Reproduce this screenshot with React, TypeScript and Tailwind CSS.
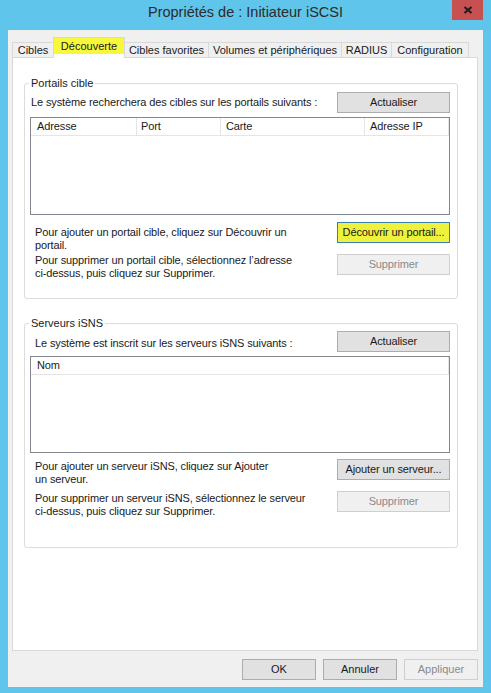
import type { ReactNode } from "react";

// bouton Windows (normal / désactivé / focus surligné)
function Btn({
  children,
  disabled,
  marked,
  w = "w-[113px]",
}: {
  children: ReactNode;
  disabled?: boolean;
  marked?: boolean;
  w?: string;
}) {
  let cls = "bg-[#e1e1e1] border-[#adadad] text-[#1a1a1a]";
  if (disabled) cls = "bg-[#f0f0f0] border-[#cfcfcf] text-[#8a8a8a]";
  if (marked) cls = "bg-[#eef23c] border-[#3c7fb1] text-[#1a1a1a]";
  return (
    <div
      className={`${w} h-[21px] shrink-0 border ${cls} flex items-center justify-center text-[11px] leading-[13px] whitespace-nowrap`}
    >
      {children}
    </div>
  );
}

function Tab({ label, w, selected }: { label: string; w: string; selected?: boolean }) {
  if (selected) {
    return (
      <div className={`${w} h-[21px] -mb-[1px] -ml-[1px] relative z-10 bg-white border-t border-l border-r border-[#d9d9d9]`}>
        <div className="h-[16px] bg-[#f7f83c] flex items-center justify-center text-[11px] text-[#1a1a1a]">
          {label}
        </div>
      </div>
    );
  }
  return (
    <div
      className={`${w} h-[15px] -ml-[1px] first:ml-0 bg-[#f0f0f0] border-t border-l border-r border-[#d9d9d9] flex items-center justify-center text-[11px] text-[#1a1a1a]`}
    >
      {label}
    </div>
  );
}

export default function App() {
  return (
    <div className="w-[491px] h-[693px] bg-[#60c5ea] flex flex-col px-[8px] pb-[6px] font-['Liberation_Sans',Arial,sans-serif] text-[#1a1a1a]">
      {/* barre de titre */}
      <div className="h-[30px] shrink-0 relative flex items-center justify-center pb-[4px]">
        <span className="text-[14.5px] text-[#2b2b2b]">Propriétés de : Initiateur iSCSI</span>
        <div className="absolute right-0 top-0 w-[31px] h-[20px] bg-[#c75050] flex items-center justify-center">
          <svg width="10" height="8" viewBox="0 0 10 8">
            <path d="M1.5 1 L8.5 7 M8.5 1 L1.5 7" stroke="#1c1c1c" strokeWidth="2" fill="none" />
          </svg>
        </div>
      </div>

      {/* zone client */}
      <div className="flex-1 bg-[#f0f0f0] flex flex-col pt-[7px] pl-[4px] pr-[5px]">
        {/* onglets */}
        <div className="h-[20px] flex items-end">
          <Tab label="Cibles" w="w-[42px]" />
          <Tab label="Découverte" w="w-[72px]" selected />
          <Tab label="Cibles favorites" w="w-[85px]" />
          <Tab label="Volumes et périphériques" w="w-[134px]" />
          <Tab label="RADIUS" w="w-[51px]" />
          <Tab label="Configuration" w="w-[78px]" />
        </div>

        {/* panneau */}
        <div className="h-[594px] border border-[#d9d9d9] bg-white pl-[11px] pt-[17px] flex flex-col">
          {/* Portails cible */}
          <fieldset className="w-[434px] h-[224px] border border-[#dcdcdc] rounded-[3px] pl-[5px] pr-[7px] pt-[1px]">
            <legend className="-ml-[1px] px-[2px] text-[11px] leading-[16px]">Portails cible</legend>
            <div className="flex flex-col tracking-[-0.12px]">
              <div className="h-[21px] flex items-center justify-between">
                <span className="pl-[1px] text-[11px]">
                  Le système recherchera des cibles sur les portails suivants :
                </span>
                <Btn>Actualiser</Btn>
              </div>

              <div className="mt-[4px] h-[98px] border border-[#828790] bg-white">
                <div className="h-[18px] flex border-b border-[#e5e5e5] text-[11px]">
                  <div className="w-[106px] border-r border-[#e5e5e5] pl-[6px] flex items-center">Adresse</div>
                  <div className="w-[84px] border-r border-[#e5e5e5] pl-[4px] flex items-center">Port</div>
                  <div className="w-[144px] border-r border-[#e5e5e5] pl-[5px] flex items-center">Carte</div>
                  <div className="w-[84px] border-r border-[#e5e5e5] pl-[5px] flex items-center">Adresse IP</div>
                </div>
              </div>

              <div className="mt-[7px] flex justify-between">
                <div className="pl-[5px] pt-[3.5px] flex flex-col gap-[2px] text-[11px] leading-[13px] whitespace-nowrap">
                  <p>
                    Pour ajouter un portail cible, cliquez sur Découvrir un
                    <br />
                    portail.
                  </p>
                  <p>
                    Pour supprimer un portail cible, sélectionnez l’adresse
                    <br />
                    ci-dessus, puis cliquez sur Supprimer.
                  </p>
                </div>
                <div className="flex flex-col gap-[11px]">
                  <Btn marked>Découvrir un portail...</Btn>
                  <Btn disabled>Supprimer</Btn>
                </div>
              </div>
            </div>
          </fieldset>

          {/* Serveurs iSNS */}
          <fieldset className="mt-[16px] w-[434px] h-[233px] border border-[#dcdcdc] rounded-[3px] pl-[5px] pr-[7px]">
            <legend className="-ml-[1px] px-[2px] text-[11px] leading-[16px]">Serveurs iSNS</legend>
            <div className="flex flex-col tracking-[-0.12px]">
              <div className="h-[21px] flex items-center justify-between">
                <span className="pl-[5px] pt-[3px] text-[11px]">
                  Le système est inscrit sur les serveurs iSNS suivants :
                </span>
                <Btn>Actualiser</Btn>
              </div>

              <div className="mt-[4px] h-[97px] border border-[#828790] bg-white">
                <div className="h-[18px] flex border-b border-[#e5e5e5] text-[11px]">
                  <div className="w-[418px] border-r border-[#e5e5e5] pl-[6px] flex items-center">Nom</div>
                </div>
              </div>

              <div className="mt-[6px] flex justify-between">
                <div className="pl-[5px] pt-[0.5px] flex flex-col gap-[6px] text-[11px] leading-[13px] whitespace-nowrap">
                  <p>
                    Pour ajouter un serveur iSNS, cliquez sur Ajouter
                    <br />
                    un serveur.
                  </p>
                  <p>
                    Pour supprimer un serveur iSNS, sélectionnez le serveur
                    <br />
                    ci-dessus, puis cliquez sur Supprimer.
                  </p>
                </div>
                <div className="flex flex-col gap-[11px]">
                  <Btn>Ajouter un serveur...</Btn>
                  <Btn disabled>Supprimer</Btn>
                </div>
              </div>
            </div>
          </fieldset>
        </div>

        {/* boutons du bas */}
        <div className="mt-[8px] flex justify-end gap-[7px]">
          <Btn w="w-[74px]">OK</Btn>
          <Btn w="w-[74px]">Annuler</Btn>
          <Btn w="w-[74px]" disabled>
            Appliquer
          </Btn>
        </div>
      </div>
    </div>
  );
}
